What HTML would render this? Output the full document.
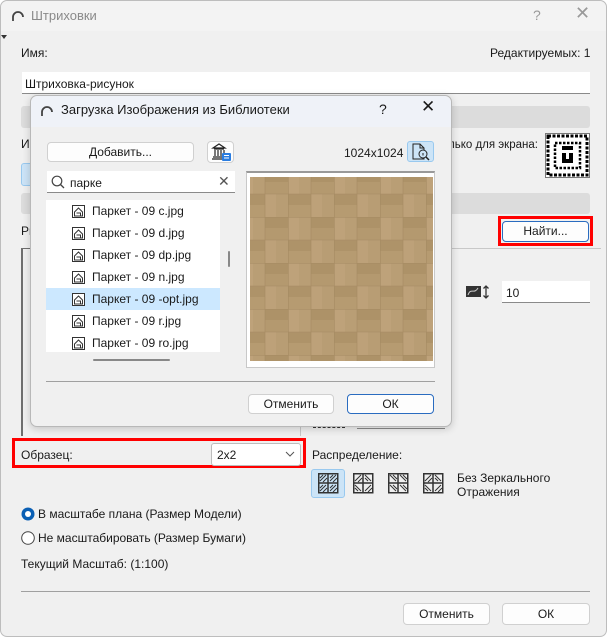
<!DOCTYPE html>
<html><head><meta charset="utf-8"><style>
*{box-sizing:border-box;margin:0;padding:0}
body{width:607px;height:637px;background:#fff;font-family:"Liberation Sans",sans-serif;font-size:12px;color:#1a1a1a;position:relative;overflow:hidden}
.a{position:absolute}
.t{position:absolute;white-space:nowrap;line-height:14px}
.btn{position:absolute;background:#fdfdfd;border:1px solid #d0d0d0;border-radius:4px;text-align:center;line-height:18px}
.inp{position:absolute;background:#fff;border-bottom:1px solid #8a8a8a}
.row{position:absolute;left:46px;width:174px;height:22px}
.row svg{position:absolute;left:26px;top:5px}
.row span{position:absolute;left:46px;top:4px;white-space:nowrap}
</style></head><body>
<div class="a" style="left:0;top:0;width:607px;height:637px;background:#f0f0f0;border:1px solid #bdbdbd;border-radius:7px"></div>
<div class="a" style="left:1px;top:1px;width:605px;height:30px;background:#f3f3f3;border-radius:7px 7px 0 0"></div>
<svg class="a" style="left:11px;top:9px" width="14" height="14"><path d="M2 12 V8 A5 5 0 0 1 12 8" fill="none" stroke="#444" stroke-width="1.8"/></svg>
<div class="t" style="left:31px;top:9px;font-size:13px;color:#8a8a8a">Штриховки</div>
<div class="t" style="left:533px;top:8px;font-size:14px;color:#999">?</div>
<div class="t" style="left:575px;top:6px;font-size:18px;color:#999">✕</div>
<div class="a" style="left:1px;top:35px;width:0;height:0;border-left:3px solid transparent;border-right:3px solid transparent;border-top:4px solid #333"></div>
<div class="t" style="left:21px;top:46px">Имя:</div>
<div class="t" style="left:490px;top:46px;width:100px;text-align:right">Редактируемых: 1</div>
<div class="inp" style="left:22px;top:72px;width:568px;height:22px"></div>
<div class="t" style="left:25px;top:77px">Штриховка-рисунок</div>
<div class="a" style="left:21px;top:106px;width:569px;height:22px;background:#dcdcdc;border-radius:3px"></div>
<div class="t" style="left:21px;top:137px">Ис</div>
<div class="a" style="left:21px;top:163px;width:12px;height:23px;background:#cce4f7;border:1px solid #99c9ef;border-radius:3px"></div>
<div class="t" style="left:448px;top:138px;font-size:11.5px">лько для экрана:</div>
<svg class="a" style="left:545px;top:133px" width="45" height="45"><rect x="0.5" y="0.5" width="44" height="44" fill="#fff" stroke="#777"/><rect x="3" y="3" width="39" height="39" fill="none" stroke="#000" stroke-width="3" stroke-dasharray="3 1.5"/><rect x="10" y="10" width="25" height="25" fill="none" stroke="#000" stroke-width="2.5" stroke-dasharray="2.5 1.5"/><rect x="17" y="13" width="11" height="4" fill="#000"/><rect x="17" y="20" width="4" height="10" fill="#000"/><rect x="24" y="20" width="4" height="10" fill="#000"/><rect x="17" y="26" width="11" height="4" fill="#000"/></svg>
<div class="a" style="left:21px;top:193px;width:569px;height:21px;background:#dcdcdc;border-radius:3px"></div>
<div class="t" style="left:21px;top:224px">Ри</div>
<div class="a" style="left:498px;top:216px;width:95px;height:30px;border:3px solid #f00"></div>
<div class="btn" style="left:502px;top:221px;width:87px;height:21px;border-color:#2a6cc0">Найти...</div>
<div class="a" style="left:451px;top:248px;width:150px;height:1px;background:#c8c8c8"></div>
<div class="a" style="left:21px;top:248px;width:2px;height:188px;background:#6e6e6e"></div>
<div class="a" style="left:21px;top:248px;width:20px;height:1px;background:#6e6e6e"></div>
<div class="a" style="left:300px;top:420px;width:1px;height:16px;background:#c8c8c8"></div>
<svg class="a" style="left:466px;top:285px" width="24" height="14"><rect x="0" y="1" width="15" height="11" fill="#333"/><path d="M2 10 C5 2 8 10 12 3" stroke="#ccc" fill="none"/><path d="M20 1 V13 M17.5 3.5 L20 1 L22.5 3.5 M17.5 10.5 L20 13 L22.5 10.5" stroke="#333" fill="none" stroke-width="1.3"/></svg>
<div class="inp" style="left:502px;top:281px;width:88px;height:22px"></div>
<div class="t" style="left:506px;top:286px">10</div>
<div class="a" style="left:313px;top:427px;width:32px;height:1px;border-top:1px dashed #333"></div>
<div class="a" style="left:357px;top:428px;width:88px;height:1px;background:#8a8a8a"></div>
<div class="a" style="left:12px;top:438px;width:294px;height:30px;border:3px solid #f00"></div>
<div class="t" style="left:21px;top:448px">Образец:</div>
<div class="a" style="left:211px;top:443px;width:90px;height:23px;background:#fff;border:1px solid #bdbdbd;border-radius:3px"></div>
<div class="t" style="left:217px;top:448px">2x2</div>
<svg class="a" style="left:285px;top:451px" width="10" height="7"><path d="M1 1 L5 5 L9 1" fill="none" stroke="#555"/></svg>
<div class="t" style="left:312px;top:448px">Распределение:</div>
<div class="a" style="left:311px;top:469px;width:34px;height:29px;background:#cce4f7;border:1px solid #99c9ef;border-radius:3px"></div>
<svg class="a" style="left:318px;top:473px" width="140" height="22">
<defs><g id="q"><rect x="0.75" y="0.75" width="19" height="19" fill="none" stroke="#333" stroke-width="1.5"/><path d="M10 1V20M1 10H20" stroke="#333" stroke-width="1.5"/></g></defs>
<use href="#q"/><path d="M2 8L8 2M2 5L5 2M5 9L9 5M12 8L18 2M12 5L15 2M15 9L19 5M2 18L8 12M2 15L5 12M5 19L9 15M12 18L18 12M12 15L15 12M15 19L19 15" stroke="#333"/>
<g transform="translate(35,0)"><use href="#q"/><path d="M2 8L8 2M5 9L9 5M12 2L18 8M12 5L15 8M2 12L8 18M2 15L5 18M12 18L18 12M15 19L19 15" stroke="#333"/></g>
<g transform="translate(70,0)"><use href="#q"/><path d="M2 2L8 8M5 2L9 6M12 2L18 8M15 2L19 6M2 12L8 18M5 12L9 16M12 12L18 18M15 12L19 16" stroke="#333"/></g>
<g transform="translate(105,0)"><use href="#q"/><path d="M2 8L8 2M5 9L9 5M12 2L18 8M12 5L15 8M2 12L8 18M2 15L5 18M12 18L18 12M15 19L19 15" stroke="#333"/></g>
</svg>
<div class="t" style="left:457px;top:471px">Без Зеркального</div>
<div class="t" style="left:457px;top:485px">Отражения</div>
<svg class="a" style="left:21px;top:507px" width="14" height="14"><circle cx="7" cy="7" r="6.5" fill="#0a5fb4"/><circle cx="7" cy="7" r="3" fill="#fff"/></svg>
<div class="t" style="left:38px;top:507px">В масштабе плана (Размер Модели)</div>
<svg class="a" style="left:21px;top:531px" width="14" height="14"><circle cx="7" cy="7" r="6.3" fill="#fff" stroke="#444"/></svg>
<div class="t" style="left:38px;top:531px">Не масштабировать (Размер Бумаги)</div>
<div class="t" style="left:21px;top:557px">Текущий Масштаб: (1:100)</div>
<div class="a" style="left:21px;top:591px;width:569px;height:1px;background:#a0a0a0"></div>
<div class="btn" style="left:403px;top:603px;width:87px;height:22px;line-height:20px">Отменить</div>
<div class="btn" style="left:502px;top:603px;width:88px;height:22px;line-height:20px">ОК</div>

<div class="a" style="left:30px;top:95px;width:422px;height:332px;background:#f0f0f0;border:1px solid #b8b8b8;border-radius:7px;box-shadow:0 2px 8px rgba(0,0,0,.18)"></div>
<div class="a" style="left:31px;top:96px;width:420px;height:31px;background:#eff2f8;border-radius:7px 7px 0 0"></div>
<svg class="a" style="left:40px;top:104px" width="14" height="14"><path d="M2 12 V8 A5 5 0 0 1 12 8" fill="none" stroke="#444" stroke-width="1.8"/></svg>
<div class="t" style="left:61px;top:103px;font-size:13px">Загрузка Изображения из Библиотеки</div>
<div class="t" style="left:379px;top:102px;font-size:14px">?</div>
<div class="t" style="left:421px;top:100px;font-size:17px">✕</div>
<div class="btn" style="left:47px;top:142px;width:147px;height:20px">Добавить...</div>
<div class="btn" style="left:207px;top:141px;width:27px;height:22px"></div>
<svg class="a" style="left:211px;top:143px" width="22" height="20"><path d="M2 5 L8 1 L14 5 Z M3 6H13 M4 7V13 M7 7V13 M10 7V13 M13 7V13 M2 14H14 M1 16H15" stroke="#222" fill="none" stroke-width="1.2"/><rect x="11" y="10" width="9" height="8" fill="#2a7de1" rx="1"/><path d="M13 12.5H18M13 15H18" stroke="#fff"/></svg>
<div class="t" style="left:344px;top:146px">1024x1024</div>
<div class="a" style="left:407px;top:141px;width:27px;height:21px;background:#cce4f7;border:1px solid #99c9ef;border-radius:3px"></div>
<svg class="a" style="left:410px;top:143px" width="22" height="18"><path d="M3 1H10L14 5V16H3Z M10 1V5H14" fill="none" stroke="#222"/><circle cx="13" cy="11" r="4" fill="#cce4f7" stroke="#222"/><path d="M16 14L19 17" stroke="#222" stroke-width="1.5"/><path d="M13 10V12.5" stroke="#222"/></svg>
<div class="inp" style="left:47px;top:171px;width:188px;height:22px"></div>
<svg class="a" style="left:51px;top:175px" width="14" height="14"><circle cx="6" cy="6" r="4.8" fill="none" stroke="#444" stroke-width="1.2"/><path d="M9.5 9.5L13 13" stroke="#444" stroke-width="1.3"/></svg>
<div class="t" style="left:70px;top:176px">парке</div>
<div class="t" style="left:218px;top:174px;font-size:14px;color:#555">✕</div>
<div class="a" style="left:46px;top:200px;width:174px;height:152px;background:#fff"></div>
<div class="row" style="top:200px"><svg width="13" height="13"><rect x=".5" y=".5" width="12" height="12" fill="#fff" stroke="#333"/><path d="M2.5 7L6.5 3L10.5 7V11H2.5Z M4.5 8H8.5V11" fill="none" stroke="#333"/></svg><span>Паркет - 09 c.jpg</span></div>
<div class="row" style="top:222px"><svg width="13" height="13"><rect x=".5" y=".5" width="12" height="12" fill="#fff" stroke="#333"/><path d="M2.5 7L6.5 3L10.5 7V11H2.5Z M4.5 8H8.5V11" fill="none" stroke="#333"/></svg><span>Паркет - 09 d.jpg</span></div>
<div class="row" style="top:244px"><svg width="13" height="13"><rect x=".5" y=".5" width="12" height="12" fill="#fff" stroke="#333"/><path d="M2.5 7L6.5 3L10.5 7V11H2.5Z M4.5 8H8.5V11" fill="none" stroke="#333"/></svg><span>Паркет - 09 dp.jpg</span></div>
<div class="row" style="top:266px"><svg width="13" height="13"><rect x=".5" y=".5" width="12" height="12" fill="#fff" stroke="#333"/><path d="M2.5 7L6.5 3L10.5 7V11H2.5Z M4.5 8H8.5V11" fill="none" stroke="#333"/></svg><span>Паркет - 09 n.jpg</span></div>
<div class="row" style="top:288px;background:#cce8ff"><svg width="13" height="13"><rect x=".5" y=".5" width="12" height="12" fill="#fff" stroke="#333"/><path d="M2.5 7L6.5 3L10.5 7V11H2.5Z M4.5 8H8.5V11" fill="none" stroke="#333"/></svg><span>Паркет - 09 -opt.jpg</span></div>
<div class="row" style="top:310px"><svg width="13" height="13"><rect x=".5" y=".5" width="12" height="12" fill="#fff" stroke="#333"/><path d="M2.5 7L6.5 3L10.5 7V11H2.5Z M4.5 8H8.5V11" fill="none" stroke="#333"/></svg><span>Паркет - 09 r.jpg</span></div>
<div class="row" style="top:332px;height:20px"><svg width="13" height="13"><rect x=".5" y=".5" width="12" height="12" fill="#fff" stroke="#333"/><path d="M2.5 7L6.5 3L10.5 7V11H2.5Z M4.5 8H8.5V11" fill="none" stroke="#333"/></svg><span>Паркет - 09 ro.jpg</span></div>
<div class="a" style="left:228px;top:251px;width:2px;height:16px;background:#888;border-radius:1px"></div>
<div class="a" style="left:93px;top:359px;width:77px;height:2px;background:#888;border-radius:1px"></div>
<div class="a" style="left:246px;top:171px;width:189px;height:197px;background:#fff;border:1px solid #c8c8c8;border-top:2px solid #999"></div>
<svg class="a" style="left:250px;top:177px" width="183" height="184">
<defs><pattern id="w" width="46" height="46" patternUnits="userSpaceOnUse" x="-8" y="-6">
<rect width="46" height="46" fill="#b79c73"/>
<rect x="0" y="0" width="11" height="23" fill="#bea27a"/><rect x="11" y="0" width="12" height="23" fill="#b99e75"/>
<rect x="23" y="0" width="23" height="11" fill="#ad9268"/><rect x="23" y="11" width="23" height="12" fill="#b4996f"/>
<rect x="0" y="23" width="23" height="11" fill="#ae9369"/><rect x="0" y="34" width="23" height="12" fill="#b69b71"/>
<rect x="23" y="23" width="11" height="23" fill="#bda179"/><rect x="34" y="23" width="12" height="23" fill="#b89d74"/>
<path d="M0 .5H46M.5 0V46M23 0V46M0 23H46" stroke="#a58a62" stroke-width=".6"/>
</pattern></defs>
<rect width="183" height="184" fill="url(#w)"/></svg>
<div class="a" style="left:46px;top:381px;width:389px;height:1px;background:#a0a0a0"></div>
<div class="btn" style="left:248px;top:394px;width:86px;height:20px">Отменить</div>
<div class="btn" style="left:347px;top:394px;width:87px;height:20px;border-color:#2a6cc0">ОК</div>
</body></html>
